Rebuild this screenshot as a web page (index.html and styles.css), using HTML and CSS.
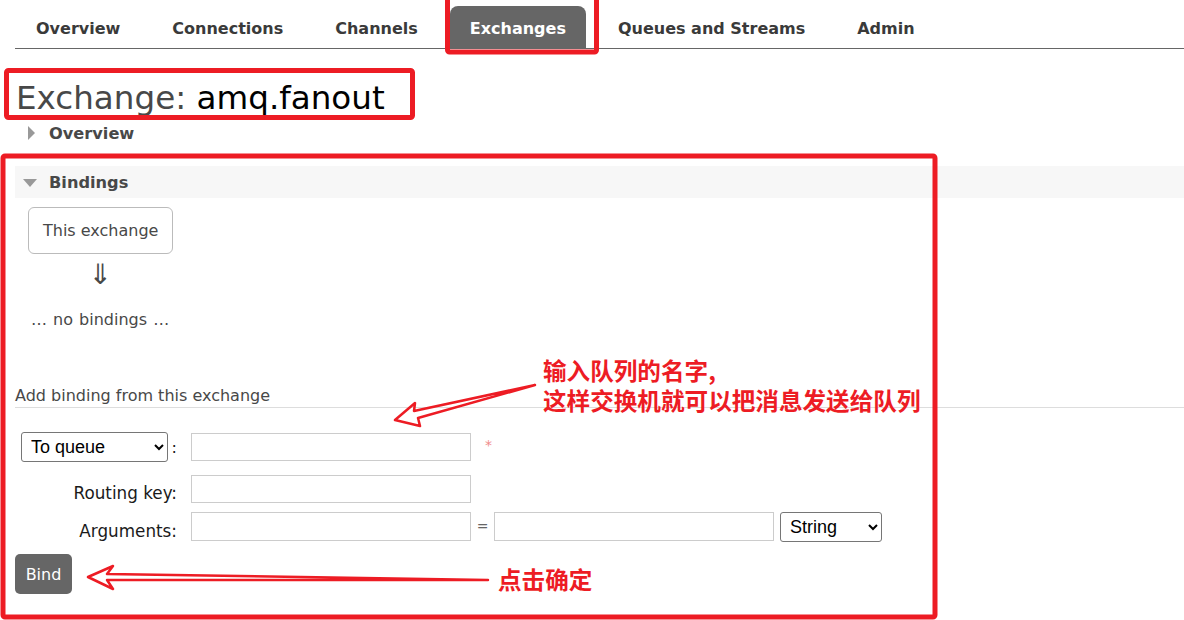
FILE: index.html
```html
<!DOCTYPE html>
<html>
<head>
<meta charset="utf-8">
<link rel="stylesheet" href="styles.css">
</head>
<body>
<ul class="tabs">
  <li><a>Overview</a></li>
  <li><a>Connections</a></li>
  <li><a>Channels</a></li>
  <li class="active"><a>Exchanges</a></li>
  <li><a>Queues and Streams</a></li>
  <li><a>Admin</a></li>
</ul>
<main class="main">
  <h1 class="title">Exchange: <b class="name">amq.fanout</b></h1>
  <div class="section-head collapsed"><span class="tri-right"></span>Overview</div>
  <div class="section-head expanded"><span class="tri-down"></span>Bindings</div>
  <div class="bindings">
    <div class="node">This exchange</div>
    <div class="down-arrow">&#8659;</div>
    <p class="none">… no bindings …</p>
  </div>
  <h3 class="subhead">Add binding from this exchange</h3>
  <form class="form">
    <div class="row row1">
      <div class="th th-select">
        <select class="sel sel-dest"><option>To queue</option><option>To exchange</option></select><span class="colon">:</span>
      </div>
      <input class="inp" type="text">
      <span class="req">*</span>
    </div>
    <div class="row row2">
      <label class="th lbl-rk">Routing key:</label>
      <input class="inp" type="text">
    </div>
    <div class="row row3">
      <label class="th lbl-args">Arguments:</label>
      <input class="inp" type="text">
      <span class="eq">=</span>
      <input class="inp" type="text">
      <select class="sel sel-type"><option>String</option><option>Number</option><option>Boolean</option><option>List</option></select>
    </div>
    <button type="button" class="btn">Bind</button>
  </form>
</main>

<svg class="annot" width="1184" height="620" viewBox="0 0 1184 620">
  <g fill="none" stroke="#ed1c24" stroke-linejoin="round">
    <rect x="447.5" y="-3" width="149" height="55" rx="2" stroke-width="5"/>
    <rect x="6.5" y="70.5" width="406" height="47" rx="2" stroke-width="5"/>
    <rect x="3" y="156" width="932" height="461" rx="2" stroke-width="5"/>
    <polygon points="395,420 415,403 414,411 535,385 418,418 420,426" stroke-width="2.5"/>
    <polygon points="88,577 113,566 107,574 488,580 107,580 113,589" stroke-width="2.5"/>
  </g>
</svg>
<div class="note note1">
  <div class="note-line">输入队列的名字,</div>
  <div class="note-line">这样交换机就可以把消息发送给队列</div>
</div>
<div class="note note2">点击确定</div>
</body>
</html>
```

FILE: styles.css
```css
html, body {
  margin: 0;
  padding: 0;
}
body {
  position: relative;
  width: 1184px;
  height: 620px;
  overflow: hidden;
  background: #fff;
  font-family: "DejaVu Sans", Verdana, sans-serif;
  color: #484848;
}
.tabs {
  display: flex;
  list-style: none;
  margin: 6px 0 0 15px;
  padding: 0 0 0 1px;
  height: 42px;
  border-bottom: 1px solid #666;
  gap: 12px;
}
.tabs li a {
  display: block;
  padding: 3px 20px 0;
  line-height: 39px;
  font-size: 16px;
  font-weight: bold;
  color: #3a3a3a;
  white-space: nowrap;
}
.tabs li.active a {
  background: #666;
  color: #fff;
  border-radius: 8px 8px 0 0;
}
.main {
  padding-left: 15px;
}
.title {
  margin: 30px 0 0 1px;
  font-size: 32.6px;
  line-height: 38px;
  font-weight: normal;
  color: #484848;
  white-space: nowrap;
}
.title .name {
  font-weight: normal;
  color: #000;
}
.section-head {
  display: flex;
  align-items: center;
  height: 32px;
  padding-left: 34px;
  font-size: 16.2px;
  font-weight: bold;
  color: #484848;
  position: relative;
}
.section-head.collapsed {
  margin-top: 0;
}
.section-head.expanded {
  margin-top: 17px;
  background: #f7f7f7;
}
.tri-right {
  position: absolute;
  left: 13px;
  top: 9px;
  width: 0;
  height: 0;
  border-left: 7px solid #999;
  border-top: 7px solid transparent;
  border-bottom: 7px solid transparent;
}
.tri-down {
  position: absolute;
  left: 8px;
  top: 13px;
  width: 0;
  height: 0;
  border-top: 8px solid #999;
  border-left: 7px solid transparent;
  border-right: 7px solid transparent;
}
.bindings {
  padding-left: 13px;
}
.node {
  display: inline-block;
  margin-top: 9px;
  padding: 13px 14px 12px;
  border: 1px solid #bbb;
  border-radius: 6px;
  font-size: 16px;
  line-height: 20px;
  color: #484848;
}
.down-arrow {
  width: 145px;
  text-align: center;
  font-size: 28px;
  line-height: 30px;
  margin-top: 6px;
  color: #484848;
}
.none {
  margin: 20px 0 0 3px;
  font-size: 16px;
  line-height: 20px;
  word-spacing: 1px;
}
.subhead {
  margin: 56px 0 0 0;
  padding-bottom: 1px;
  font-size: 16px;
  line-height: 20px;
  font-weight: normal;
  color: #484848;
  border-bottom: 1px solid #ddd;
}
.form {
  margin-top: 24px;
}
.row {
  display: flex;
  align-items: center;
}
.row2 {
  margin-top: 13px;
}
.row3 {
  margin-top: 7px;
}
.th {
  width: 162px;
  margin-right: 14px;
  text-align: right;
  font-size: 16.8px;
  color: #1a1a1a;
  flex: none;
}
.lbl-rk {
  margin-top: 8px;
}
.lbl-args {
  margin-top: 10px;
}
.th-select {
  display: flex;
  align-items: center;
  text-align: left;
}
.sel {
  font-family: "Liberation Sans", Arial, sans-serif;
  font-size: 18px;
  height: 30px;
  padding-left: 5px;
  border: 1px solid #767676;
  border-radius: 3px;
  background: #fff;
  color: #000;
}
.sel-dest {
  margin-left: 6px;
  width: 148px;
}
.colon {
  margin-left: 4px;
  font-size: 16px;
  color: #1a1a1a;
}
.inp {
  box-sizing: border-box;
  width: 280px;
  height: 28px;
  margin: 0;
  border: 1px solid #ccc;
  background: #fff;
  flex: none;
}
.row3 .inp {
  height: 29px;
}
.req {
  margin-left: 14px;
  margin-top: -4px;
  font-size: 14px;
  color: #f08a8a;
}
.eq {
  width: 23px;
  text-align: center;
  font-size: 14px;
  color: #666;
}
.sel-type {
  margin-left: 6px;
  width: 102px;
  margin-top: 2px;
}
.btn {
  display: block;
  margin-top: 12px;
  width: 57px;
  height: 40px;
  padding: 0;
  border: none;
  border-radius: 5px;
  background: #666;
  color: #fff;
  font-family: "DejaVu Sans", Verdana, sans-serif;
  font-size: 16px;
}
.annot {
  position: absolute;
  left: 0;
  top: 0;
  pointer-events: none;
}
.note {
  position: absolute;
  font-family: "Noto Sans CJK SC", sans-serif;
  font-weight: bold;
  font-size: 23.6px;
  color: #ed1c24;
  white-space: nowrap;
}
.note-line,
.note2 {
  height: 30px;
  line-height: 30px;
}
.note1 {
  left: 543px;
  top: 355px;
}
.note2 {
  left: 498px;
  top: 564px;
}
```
